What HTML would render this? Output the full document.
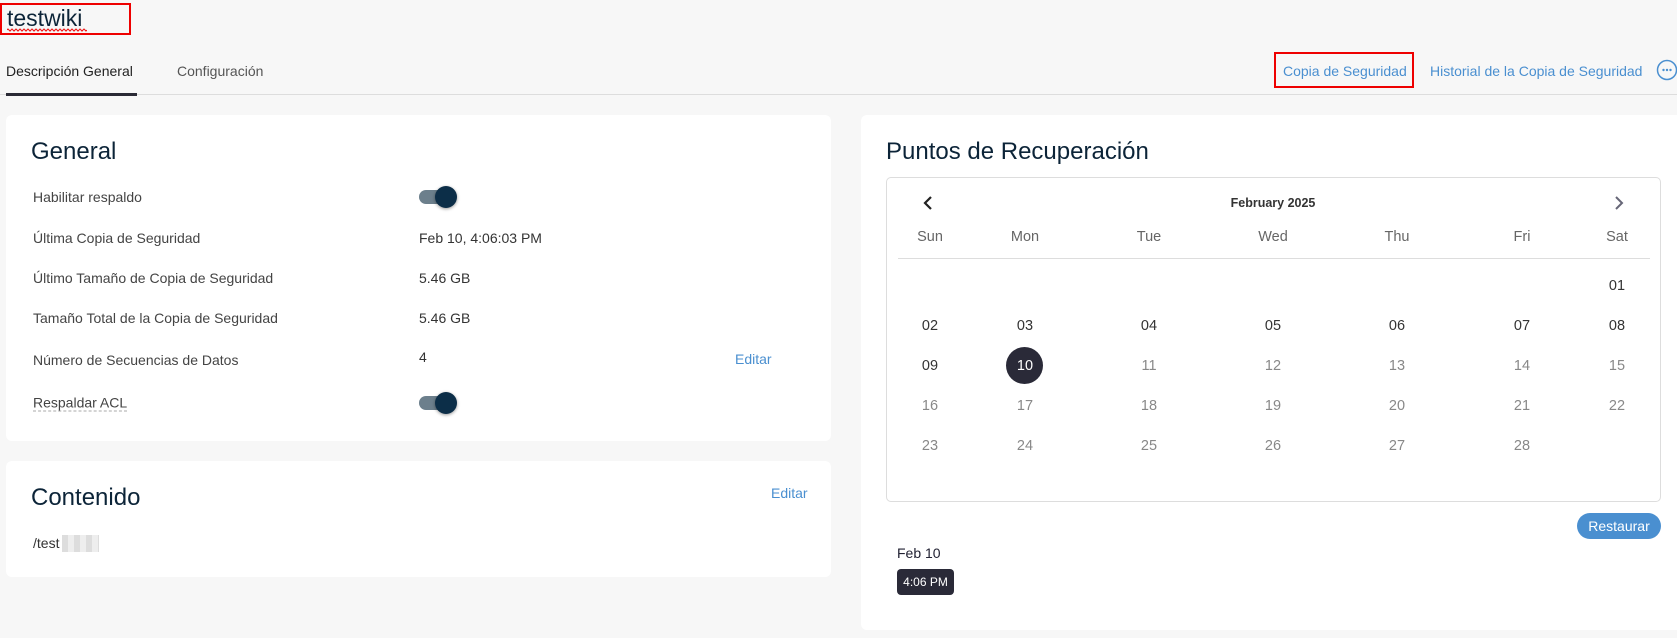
<!DOCTYPE html>
<html><head><meta charset="utf-8"><style>
*{box-sizing:border-box;margin:0;padding:0}
body{width:1677px;height:638px;background:#f7f7f7;font-family:"Liberation Sans",sans-serif;position:relative;overflow:hidden;color:#333}
.a{position:absolute;white-space:nowrap}
.card{position:absolute;background:#fff;border-radius:6px}
.lbl{position:absolute;left:33px;font-size:14px;color:#444;transform:translateY(-50%)}
.val{position:absolute;left:419px;font-size:14px;color:#333;transform:translateY(-50%)}
.tg{position:absolute;left:419px;width:36px;height:14px;border-radius:7px;background:#6c7f8c;transform:translateY(-50%)}
.tg:after{content:"";position:absolute;right:-2px;top:-4px;width:22px;height:22px;border-radius:50%;background:#0c2e48;box-shadow:0 1px 3px rgba(0,0,0,.4)}
.d{position:absolute;font-size:14.5px;transform:translate(-50%,-50%);color:#333}
.g{color:#888}
h2{position:absolute;font-weight:normal;font-size:24px;color:#0c2438;white-space:nowrap}
</style></head><body>
<div class="a" style="left:0;top:3px;width:131px;height:32px;border:2px solid #e00"></div>
<div class="a" style="left:7px;top:5px;font-size:23px;color:#0c2438">testwiki</div>
<svg class="a" style="left:7px;top:28px" width="80" height="4"><path d="M0 2 Q1 0 2 2 T4 2 T6 2 T8 2 T10 2 T12 2 T14 2 T16 2 T18 2 T20 2 T22 2 T24 2 T26 2 T28 2 T30 2 T32 2 T34 2 T36 2 T38 2 T40 2 T42 2 T44 2 T46 2 T48 2 T50 2 T52 2 T54 2 T56 2 T58 2 T60 2 T62 2 T64 2 T66 2 T68 2 T70 2 T72 2 T74 2 T76 2 T78 2 T80 2" stroke="#e00" fill="none" stroke-width="1"/></svg>
<div class="a" style="left:6px;top:63px;font-size:14px;color:#222">Descripción General</div>
<div class="a" style="left:177px;top:63px;font-size:14px;color:#555">Configuración</div>
<div class="a" style="left:0;top:94px;width:1677px;height:1px;background:#ddd"></div>
<div class="a" style="left:6px;top:93px;width:131px;height:3px;background:#2a2a35"></div>
<div class="a" style="left:1274px;top:52px;width:140px;height:36px;border:2px solid #e00"></div>
<div class="a" style="left:1283px;top:63px;font-size:14px;color:#4a8fd0">Copia de Seguridad</div>
<div class="a" style="left:1430px;top:63px;font-size:14px;color:#4a8fd0">Historial de la Copia de Seguridad</div>
<svg class="a" style="left:1656px;top:59px" width="22" height="22"><circle cx="11" cy="11" r="9.5" stroke="#4a8fd0" stroke-width="1.5" fill="none"/><circle cx="7.5" cy="11" r="1.2" fill="#4a8fd0"/><circle cx="11" cy="11" r="1.2" fill="#4a8fd0"/><circle cx="14.5" cy="11" r="1.2" fill="#4a8fd0"/></svg>

<div class="card" style="left:6px;top:115px;width:825px;height:326px"></div>
<h2 style="left:31px;top:138px">General</h2>
<div class="lbl" style="top:197px">Habilitar respaldo</div><div class="tg" style="top:197px"></div>
<div class="lbl" style="top:238px">Última Copia de Seguridad</div><div class="val" style="top:238px">Feb 10, 4:06:03 PM</div>
<div class="lbl" style="top:278px">Último Tamaño de Copia de Seguridad</div><div class="val" style="top:278px">5.46 GB</div>
<div class="lbl" style="top:318px">Tamaño Total de la Copia de Seguridad</div><div class="val" style="top:318px">5.46 GB</div>
<div class="lbl" style="top:360px">Número de Secuencias de Datos</div><div class="val" style="top:357px">4</div>
<div class="a" style="left:735px;top:351px;font-size:14px;color:#4a8fd0">Editar</div>
<div class="lbl" style="top:403px;border-bottom:1px dashed #aaa">Respaldar ACL</div><div class="tg" style="top:403px"></div>

<div class="card" style="left:6px;top:461px;width:825px;height:116px"></div>
<h2 style="left:31px;top:484px">Contenido</h2>
<div class="a" style="left:771px;top:485px;font-size:14px;color:#4a8fd0">Editar</div>
<div class="a" style="left:33px;top:535px;font-size:14px;color:#333">/test</div>
<div class="a" style="left:62px;top:535px;width:37px;height:17px;background:repeating-linear-gradient(90deg,#ddd 0 6px,#eee 6px 12px)"></div>

<div class="card" style="left:861px;top:115px;width:830px;height:515px"></div>
<h2 style="left:886px;top:138px">Puntos de Recuperación</h2>
<div class="a" style="left:886px;top:177px;width:775px;height:325px;border:1px solid #ddd;border-radius:5px"></div>
<svg class="a" style="left:922px;top:195px" width="12" height="16"><path d="M9 2 L3 8 L9 14" stroke="#222" stroke-width="2.2" fill="none"/></svg>
<svg class="a" style="left:1613px;top:195px" width="12" height="16"><path d="M3 2 L9 8 L3 14" stroke="#667" stroke-width="2" fill="none"/></svg>
<div class="d" style="left:1273px;top:203px;font-size:12.5px;font-weight:bold;color:#333">February 2025</div>
<div class="d" style="left:930px;top:237px;color:#666">Sun</div><div class="d" style="left:1025px;top:237px;color:#666">Mon</div><div class="d" style="left:1149px;top:237px;color:#666">Tue</div><div class="d" style="left:1273px;top:237px;color:#666">Wed</div><div class="d" style="left:1397px;top:237px;color:#666">Thu</div><div class="d" style="left:1522px;top:237px;color:#666">Fri</div><div class="d" style="left:1617px;top:237px;color:#666">Sat</div>
<div class="a" style="left:898px;top:258px;width:752px;height:1px;background:#ddd"></div>
<div class="d" style="left:1617px;top:286px">01</div>
<div class="d" style="left:930px;top:326px">02</div><div class="d" style="left:1025px;top:326px">03</div><div class="d" style="left:1149px;top:326px">04</div><div class="d" style="left:1273px;top:326px">05</div><div class="d" style="left:1397px;top:326px">06</div><div class="d" style="left:1522px;top:326px">07</div><div class="d" style="left:1617px;top:326px">08</div>
<div class="d" style="left:930px;top:366px">09</div>
<div class="a" style="left:1006px;top:347px;width:37px;height:37px;border-radius:50%;background:#2a2a38"></div>
<div class="d" style="left:1025px;top:366px;color:#fff">10</div>
<div class="d g" style="left:1149px;top:366px">11</div><div class="d g" style="left:1273px;top:366px">12</div><div class="d g" style="left:1397px;top:366px">13</div><div class="d g" style="left:1522px;top:366px">14</div><div class="d g" style="left:1617px;top:366px">15</div>
<div class="d g" style="left:930px;top:406px">16</div><div class="d g" style="left:1025px;top:406px">17</div><div class="d g" style="left:1149px;top:406px">18</div><div class="d g" style="left:1273px;top:406px">19</div><div class="d g" style="left:1397px;top:406px">20</div><div class="d g" style="left:1522px;top:406px">21</div><div class="d g" style="left:1617px;top:406px">22</div>
<div class="d g" style="left:930px;top:446px">23</div><div class="d g" style="left:1025px;top:446px">24</div><div class="d g" style="left:1149px;top:446px">25</div><div class="d g" style="left:1273px;top:446px">26</div><div class="d g" style="left:1397px;top:446px">27</div><div class="d g" style="left:1522px;top:446px">28</div>
<div class="a" style="left:1577px;top:513px;width:84px;height:26px;border-radius:13px;background:#4a8fd0;color:#fff;font-size:14px;text-align:center;line-height:26px">Restaurar</div>
<div class="a" style="left:897px;top:545px;font-size:14px;color:#223">Feb 10</div>
<div class="a" style="left:897px;top:569px;width:57px;height:26px;border-radius:4px;background:#2a2a38;color:#fff;font-size:12px;text-align:center;line-height:26px">4:06 PM</div>
</body></html>
